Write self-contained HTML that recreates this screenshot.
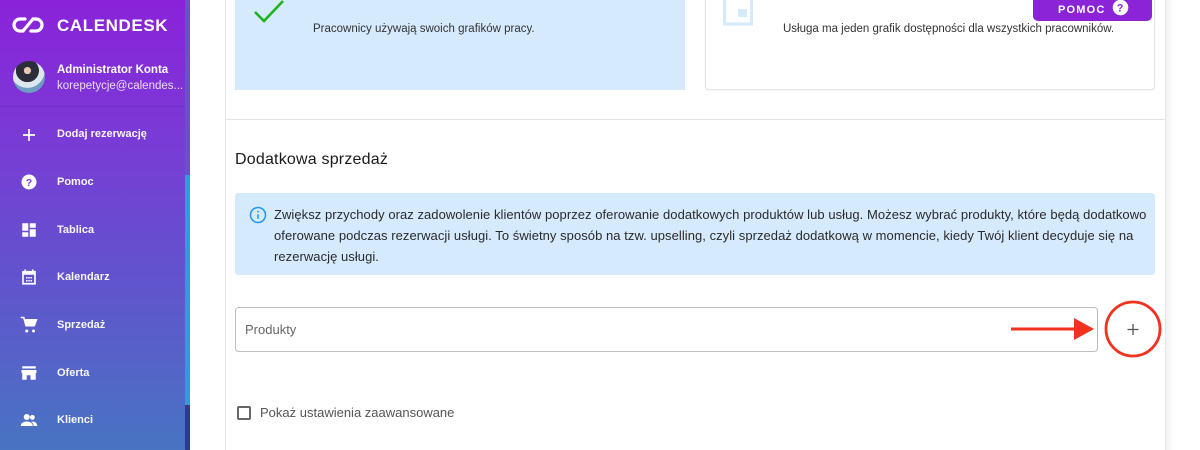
<!DOCTYPE html>
<html><head><meta charset="utf-8">
<style>
*{box-sizing:border-box;margin:0;padding:0}
body{width:1200px;height:450px;overflow:hidden;background:#fff;font-family:"Liberation Sans",Roboto,sans-serif;position:relative}
.sb{position:absolute;left:0;top:0;width:186px;height:450px;background:linear-gradient(180deg,#8a22d9 0%,#7a3ad6 30%,#5f56cc 65%,#4874c2 100%)}
.scr{position:absolute;left:185px;top:0;width:5px;height:450px;background:#6a4fd0}
.scr2{position:absolute;left:185px;top:175px;width:5px;height:230px;background:#2f9be6}
.scr3{position:absolute;left:185px;top:405px;width:5px;height:45px;background:#2a3f8a}
.logo{position:absolute;left:57px;top:16px;color:#fff;font-weight:bold;font-size:17px;letter-spacing:0.6px}
.prof{position:absolute;left:13px;top:61px;width:32px;height:32px;border-radius:50%;background:radial-gradient(circle at 45% 30%,#e8c8b0 0 12%,#2b2d3a 13% 40%,#dfe7ee 41% 60%,#6e9fc0 61%)}
.pn{position:absolute;left:57px;top:64px;color:#fff;font-size:11.5px;font-weight:bold}
.pe{position:absolute;left:57px;top:80px;color:#e8ddf7;font-size:11.5px}
.sep{position:absolute;left:0;top:106px;width:186px;height:1px;background:rgba(0,0,0,.08)}
.it{position:absolute;left:57px;color:#fff;font-size:11px;font-weight:bold;opacity:.95}
.ic{position:absolute;left:20px;width:18px;height:18px}
.main-l{position:absolute;left:225px;top:0;width:1px;height:450px;background:#e6e6e6}
.main-r{position:absolute;left:1165px;top:0;width:1px;height:450px;background:#e6e6e6}
.shadow{position:absolute;left:1166px;top:0;width:8px;height:450px;background:linear-gradient(90deg,#f2f2f2,#fff)}
.c1{position:absolute;left:235px;top:-10px;width:450px;height:100px;background:#d6eafe}
.c2{position:absolute;left:705px;top:-10px;width:450px;height:100px;background:#fff;border:1px solid #e3e3e3;border-radius:4px;box-shadow:0 1px 2px rgba(0,0,0,.06)}
.t{position:absolute;font-size:12px;color:#333}
.div{position:absolute;left:226px;top:119px;width:939px;height:1px;background:#e3e3e3}
h2{position:absolute;left:235px;top:151px;font-size:16px;font-weight:normal;color:#1a1a1a;letter-spacing:.2px}
.info{position:absolute;left:235px;top:193px;width:920px;height:82px;background:#d6eafe;border-radius:3px}
.info p{position:absolute;left:39px;top:11px;width:875px;font-size:13px;line-height:21px;color:#2a2a2a;letter-spacing:.05px}
.inp{position:absolute;left:235px;top:307px;width:863px;height:45px;border:1px solid #bdbdbd;border-radius:4px}
.inp span{position:absolute;left:9px;top:14px;font-size:13px;color:#666}
.pomoc{position:absolute;left:1033px;top:-5px;width:119px;height:26px;background:#8a24d6;border-radius:0 0 5px 5px;color:#fff;font-weight:bold;font-size:11px;letter-spacing:1.2px}
</style></head><body>
<div class="sb"></div><div class="scr"></div><div class="scr2"></div><div class="scr3"></div>
<svg style="position:absolute;left:12px;top:16px" width="32" height="18" viewBox="0 0 32 18"><path d="M13 3H8a6 6 0 0 0 0 12h3M19 15h5a6 6 0 0 0 0-12h-3M11 15l10-12" fill="none" stroke="#fff" stroke-width="3.2" stroke-linecap="round"/></svg>
<div class="logo">CALENDESK</div>
<div class="prof"></div>
<div class="pn">Administrator Konta</div>
<div class="pe">korepetycje@calendes...</div>
<div class="sep"></div>
<svg class="ic" style="top:126px" viewBox="0 0 24 24"><path d="M12 4v16M4 12h16" stroke="#fff" stroke-width="2.2"/></svg>
<div class="it" style="top:128px">Dodaj rezerwację</div>
<svg class="ic" style="top:173px" viewBox="0 0 24 24"><circle cx="12" cy="12" r="10" fill="#fff"/><text x="12" y="17" font-size="14" font-weight="bold" text-anchor="middle" fill="#7a3ad6" font-family="Liberation Sans">?</text></svg>
<div class="it" style="top:176px">Pomoc</div>
<svg class="ic" style="top:221px" viewBox="0 0 24 24"><path d="M3 3h8v10H3zM13 3h8v6h-8zM13 11h8v10h-8zM3 15h8v6H3z" fill="#fff"/></svg>
<div class="it" style="top:224px">Tablica</div>
<svg class="ic" style="top:268px" viewBox="0 0 24 24"><path d="M4 5h16v16H4zM7 2v4M17 2v4" fill="none" stroke="#fff" stroke-width="2.2"/><path d="M4 5h16v4H4z" fill="#fff"/><path d="M8 12h2v2H8zM11 12h2v2h-2zM14 12h2v2h-2zM8 16h2v2H8zM11 16h2v2h-2zM14 16h2v2h-2z" fill="#fff"/></svg>
<div class="it" style="top:271px">Kalendarz</div>
<svg class="ic" style="top:316px" viewBox="0 0 24 24"><path d="M1 2h4l3 11h11l3-8H7" fill="none" stroke="#fff" stroke-width="2"/><path d="M6 6h16l-3 8H8z" fill="#fff"/><circle cx="9" cy="20" r="2" fill="#fff"/><circle cx="18" cy="20" r="2" fill="#fff"/></svg>
<div class="it" style="top:319px">Sprzedaż</div>
<svg class="ic" style="top:364px" viewBox="0 0 24 24"><path d="M3 3h18v3H3zM2 8h20v4H2zM3 12h18v9H14v-6H9v6H3z" fill="#fff"/></svg>
<div class="it" style="top:367px">Oferta</div>
<svg class="ic" style="top:411px" viewBox="0 0 24 24"><circle cx="9" cy="8" r="4" fill="#fff"/><circle cx="16.5" cy="8.5" r="3.2" fill="#fff"/><path d="M1 20c0-4 4-6 8-6s8 2 8 6zM17 14c3 0 6 2 6 6h-5c0-2-1-4-3-5.5z" fill="#fff"/></svg>
<div class="it" style="top:414px">Klienci</div>

<div class="main-l"></div><div class="main-r"></div><div class="shadow"></div>
<div class="c1"></div>
<svg style="position:absolute;left:253px;top:0" width="32" height="24" viewBox="0 0 32 24"><path d="M2 12l9 9L30 1" fill="none" stroke="#1db31d" stroke-width="2.6"/></svg>
<div class="t" style="left:313px;top:23px;font-size:11.5px">Pracownicy używają swoich grafików pracy.</div>
<div class="c2"></div>
<svg style="position:absolute;left:723px;top:0" width="30" height="26" viewBox="0 0 30 26"><rect x="1.5" y="-3" width="27" height="27" fill="none" stroke="#d6eafe" stroke-width="3"/><rect x="15" y="9" width="9" height="8" fill="#d6eafe"/></svg>
<div class="t" style="left:783px;top:23px;font-size:11.5px">Usługa ma jeden grafik dostępności dla wszystkich pracowników.</div>
<div class="pomoc"><span style="position:absolute;left:25px;top:9px">POMOC</span>
<svg style="position:absolute;left:79px;top:4px" width="17" height="17" viewBox="0 0 24 24"><circle cx="12" cy="12" r="11" fill="#fff"/><text x="12" y="17.5" font-size="15" font-weight="bold" text-anchor="middle" fill="#8a24d6" font-family="Liberation Sans">?</text></svg></div>
<div class="div"></div>
<h2>Dodatkowa sprzedaż</h2>
<div class="info">
<svg style="position:absolute;left:14px;top:13px" width="18" height="18" viewBox="0 0 24 24"><circle cx="12" cy="12" r="10" fill="none" stroke="#2196f3" stroke-width="2"/><path d="M12 11v6" stroke="#2196f3" stroke-width="2"/><circle cx="12" cy="7.5" r="1.2" fill="#2196f3"/></svg>
<p>Zwiększ przychody oraz zadowolenie klientów poprzez oferowanie dodatkowych produktów lub usług. Możesz wybrać produkty, które będą dodatkowo oferowane podczas rezerwacji usługi. To świetny sposób na tzw. upselling, czyli sprzedaż dodatkową w momencie, kiedy Twój klient decyduje się na rezerwację usługi.</p>
</div>
<div class="inp"><span>Produkty</span></div>
<svg style="position:absolute;left:1008px;top:315px" width="88" height="28" viewBox="0 0 88 28"><path d="M3 14h64" stroke="#f0321e" stroke-width="3"/><path d="M66 3l20 11-20 11z" fill="#f0321e"/></svg>
<svg style="position:absolute;left:1103px;top:300px" width="60" height="60" viewBox="0 0 60 60"><circle cx="30" cy="29" r="27" fill="none" stroke="#f0321e" stroke-width="2.8"/><path d="M30 24v11M24.5 29.5h11" stroke="#555" stroke-width="1.3"/></svg>
<div style="position:absolute;left:237px;top:406px;width:14px;height:14px;border:2px solid #666;border-radius:2px"></div>
<div style="position:absolute;left:260px;top:405px;font-size:13px;color:#555">Pokaż ustawienia zaawansowane</div>
</body></html>
